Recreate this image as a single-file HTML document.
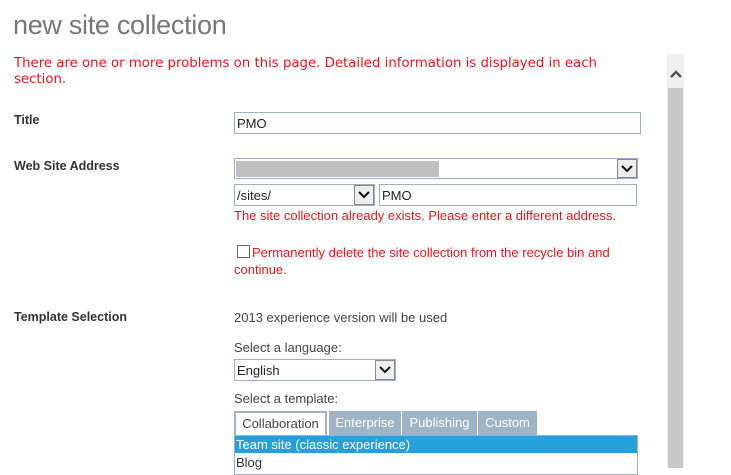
<!DOCTYPE html>
<html><head><style>
body{margin:0;width:731px;height:468px;overflow:hidden;background:#fff;font-family:"Liberation Sans",sans-serif;font-size:13px;color:#444;position:relative}
.a{position:absolute;white-space:nowrap}
.red{color:#e8141e}
.box{position:absolute;border:1px solid #9db0c3;background:#fff;box-sizing:border-box}
.dd{position:absolute;width:20px;box-sizing:border-box;border:1px solid #888;background:#eee}
.dd svg{display:block;margin:auto}
.lbl{font-weight:bold;color:#333;font-size:12.5px}
.tab{position:absolute;top:411px;height:24px;background:#9eb3c6;color:#fff;font-size:13px;line-height:24px;text-align:center;box-sizing:border-box}
</style></head><body>
<div class="a" style="left:13px;top:10px;font-size:27px;color:#777;letter-spacing:-0.3px">new site collection</div>
<div class="a red" style="left:14px;top:56px;line-height:16px;font-family:'DejaVu Sans',sans-serif;font-size:13.3px">There are one or more problems on this page. Detailed information is displayed in each<br>section.</div>
<div style="position:absolute;left:667px;top:54px;width:17px;height:414px;background:#f0f0f0"></div>
<div style="position:absolute;left:668px;top:88px;width:15px;height:380px;background:#c8c8c8"></div>
<svg style="position:absolute;left:669px;top:69px" width="14" height="10"><path d="M2 8 L7 3 L12 8" stroke="#555" stroke-width="2.5" fill="none"/></svg>

<div class="a lbl" style="left:14px;top:113px">Title</div>
<div class="box" style="left:234px;top:112px;width:407px;height:22px;padding:3px 2px;color:#222">PMO</div>

<div class="a lbl" style="left:14px;top:159px">Web Site Address</div>
<div class="box" style="left:234px;top:158px;width:404px;height:21px"></div>
<div style="position:absolute;left:236px;top:161px;width:203px;height:16px;background:#c0c0c0"></div>
<div class="dd" style="left:617px;top:159px;height:19px"><svg width="16" height="17"><path d="M3 6 L8 11 L13 6" stroke="#111" stroke-width="2" fill="none"/></svg></div>

<div class="box" style="left:234px;top:184px;width:141px;height:22px;padding:3px 2px;color:#222">/sites/</div>
<div class="dd" style="left:354px;top:185px;height:20px"><svg width="16" height="18"><path d="M3 6 L8 11 L13 6" stroke="#111" stroke-width="2" fill="none"/></svg></div>
<div class="box" style="left:379px;top:184px;width:258px;height:22px;padding:3px 2px;color:#222">PMO</div>
<div class="a red" style="left:234px;top:208px">The site collection already exists. Please enter a different address.</div>
<div style="position:absolute;left:237px;top:245px;width:13px;height:13px;border:1px solid #666;box-sizing:border-box"></div>
<div class="a red" style="left:252px;top:245px">Permanently delete the site collection from the recycle bin and</div>
<div class="a red" style="left:234px;top:262px">continue.</div>

<div class="a lbl" style="left:14px;top:310px">Template Selection</div>
<div class="a" style="left:234px;top:310px">2013 experience version will be used</div>
<div class="a" style="left:234px;top:340px">Select a language:</div>
<div class="box" style="left:234px;top:359px;width:162px;height:22px;padding:3px 2px;color:#222">English</div>
<div class="dd" style="left:375px;top:360px;height:20px"><svg width="16" height="18"><path d="M3 6 L8 11 L13 6" stroke="#111" stroke-width="2" fill="none"/></svg></div>
<div class="a" style="left:234px;top:391px">Select a template:</div>
<div class="tab" style="left:234px;width:93px;background:#fff;color:#444;border:2px solid #9eb3c6;border-bottom:none;line-height:22px">Collaboration</div>
<div class="tab" style="left:329px;width:72px">Enterprise</div>
<div class="tab" style="left:402px;width:75px">Publishing</div>
<div class="tab" style="left:478px;width:59px">Custom</div>
<div class="box" style="left:234px;top:435px;width:404px;height:40px"></div>
<div class="a" style="left:235px;top:436px;width:401px;height:17px;background:#26a0da;color:#fff;line-height:17px;padding-left:1px">Team site (classic experience)</div>
<div class="a" style="left:236px;top:455px;color:#333">Blog</div>
</body></html>
